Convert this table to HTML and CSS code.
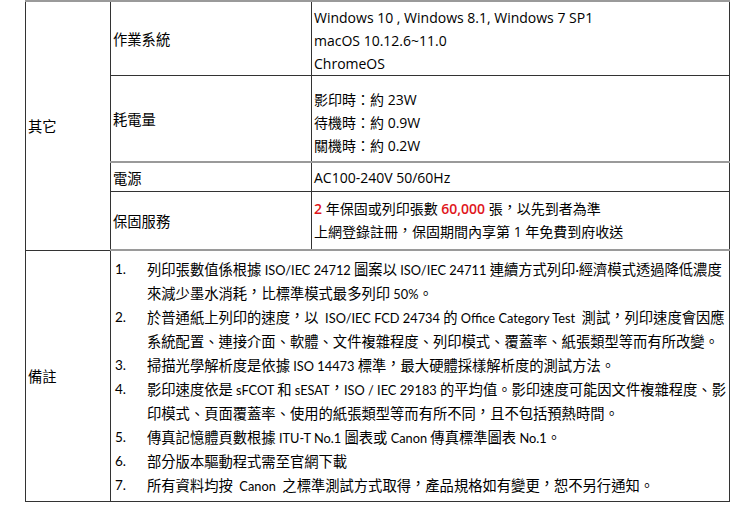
FILE: index.html
```html
<!DOCTYPE html>
<html lang="zh-TW">
<head>
<meta charset="utf-8">
<link rel="stylesheet" href="styles.css">
</head>
<body>
<table class="spec">
  <colgroup>
    <col class="c1">
    <col class="c2">
    <col class="c3">
  </colgroup>
  <tr class="row-os">
    <td class="cat" rowspan="4">其它</td>
    <td class="lbl">作業系統</td>
    <td class="val">Windows 10 , Windows 8.1, Windows 7 SP1<br>macOS 10.12.6~11.0<br>ChromeOS</td>
  </tr>
  <tr class="row-power">
    <td class="lbl">耗電量</td>
    <td class="val">影印時：約 23W<br>待機時：約 0.9W<br>關機時：約 0.2W</td>
  </tr>
  <tr class="row-src">
    <td class="lbl">電源</td>
    <td class="val">AC100-240V 50/60Hz</td>
  </tr>
  <tr class="row-warranty">
    <td class="lbl">保固服務</td>
    <td class="val"><span class="red">2</span> 年保固或列印張數 <span class="red">60,000</span> 張<span class="pc">，</span>以先到者為準<br>上網登錄註冊<span class="pc">，</span>保固期間內享第 1 年免費到府收送</td>
  </tr>
  <tr class="row-notes">
    <td class="cat">備註</td>
    <td class="notes" colspan="2">
      <ol class="note-list">
        <li><span class="num">1.</span><span class="txt">列印張數值係根據<span class="lat"> ISO/IEC 24712 </span>圖案以<span class="lat"> ISO/IEC 24711 </span>連續方式列印<span class="lat">·</span>經濟模式透過降低濃度<br>來減少墨水消耗<span class="pc">，</span>比標準模式最多列印<span class="lat"> 50%</span>。</span></li>
        <li><span class="num">2.</span><span class="txt">於普通紙上列印的速度<span class="pc">，</span>以<span class="lat">&nbsp; ISO/IEC FCD 24734 </span>的<span class="lat"> Office Category Test&nbsp; </span>測試<span class="pc">，</span>列印速度會因應<br>系統配置、連接介面、軟體、文件複雜程度、列印模式、覆蓋率、紙張類型等而有所改變。</span></li>
        <li><span class="num">3.</span><span class="txt">掃描光學解析度是依據<span class="lat"> ISO 14473 </span>標準<span class="pc">，</span>最大硬體採樣解析度的測試方法。</span></li>
        <li><span class="num">4.</span><span class="txt">影印速度依是<span class="lat"> sFCOT </span>和<span class="lat"> sESAT</span><span class="pc">，</span><span class="lat">ISO / IEC 29183 </span>的平均值。影印速度可能因文件複雜程度、影<br>印模式、頁面覆蓋率、使用的紙張類型等而有所不同<span class="pc">，</span>且不包括預熱時間。</span></li>
        <li><span class="num">5.</span><span class="txt">傳真記憶體頁數根據<span class="lat"> ITU-T No.1 </span>圖表或<span class="lat"> Canon </span>傳真標準圖表<span class="lat"> No.1</span>。</span></li>
        <li><span class="num">6.</span><span class="txt">部分版本驅動程式需至官網下載</span></li>
        <li><span class="num">7.</span><span class="txt">所有資料均按<span class="lat">&nbsp; Canon&nbsp; </span>之標準測試方式取得<span class="pc">，</span>產品規格如有變更<span class="pc">，</span>恕不另行通知。</span></li>
      </ol>
    </td>
  </tr>
</table>
</body>
</html>
```
FILE: styles.css
```css
html, body {
  margin: 0;
  padding: 0;
  background: #ffffff;
}

body {
  color: #000000;
  font-family: "Open Sans", "Noto Sans CJK TC", sans-serif;
  font-size: 14px;
}

.spec {
  margin-left: 25px;
  border-collapse: collapse;
  table-layout: fixed;
  width: 704px;
  border-top: 2px solid #9a9a9a;
}

.c1 { width: 85px; }
.c2 { width: 201px; }
.c3 { width: 418px; }

.spec td {
  border: 1px solid #333333;
  padding: 0 0 0 2px;
  vertical-align: middle;
}

.cat,
.lbl {
  font-family: "Noto Sans CJK TC", sans-serif;
  font-size: 14.3px;
}

.val {
  line-height: 23px;
}

.row-os .val {
  padding-top: 4px;
  padding-bottom: 0;
}

.row-power td {
  border-bottom: 2px solid #9a9a9a;
}

.row-power .val {
  padding-top: 12px;
  padding-bottom: 4px;
}

.row-src .val {
  height: 28px;
}

.row-warranty td {
  border-bottom: 2px solid #9a9a9a;
}

.row-warranty .val {
  padding-top: 5px;
  padding-bottom: 6px;
}

.red {
  color: #e0161b;
  font-weight: 600;
}

.pc {
  line-height: 1;
  vertical-align: 0.14em;
}

.notes {
  font-family: "Noto Sans CJK TC", sans-serif;
  font-size: 14.3px;
  padding: 6px 0 4px 4px !important;
}

.note-list {
  list-style: none;
  margin: 0;
  padding: 0;
}

.note-list li {
  display: flex;
  line-height: 24px;
  white-space: nowrap;
}

.num {
  flex: 0 0 32px;
  font-family: "Lato", sans-serif;
  font-size: 13.5px;
}

.txt {
  flex: 1 1 auto;
}

.lat {
  font-family: "Lato", sans-serif;
  font-size: 12.8px;
  line-height: 1;
}
```
